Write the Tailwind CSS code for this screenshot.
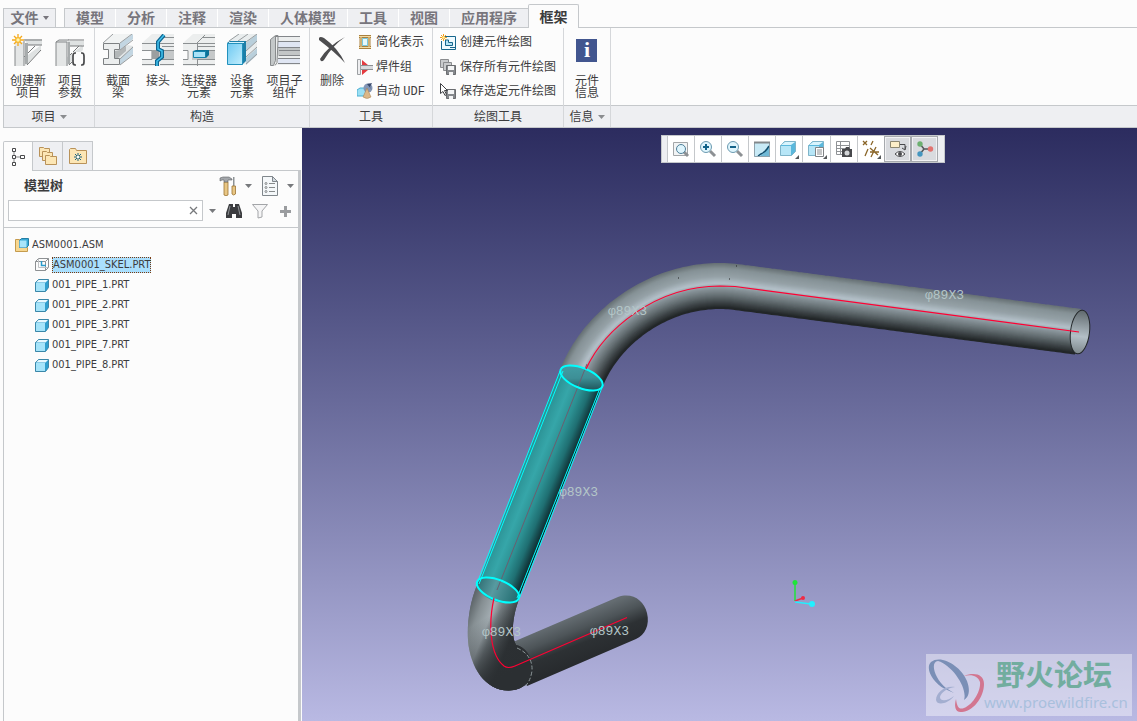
<!DOCTYPE html>
<html lang="zh-CN">
<head>
  <meta charset="UTF-8" />
  <meta name="viewport" content="width=device-width, initial-scale=1.0"/>
  <title>ASM0001 - 框架</title>
  <script src="https://cdn.jsdelivr.net/npm/@tailwindcss/browser@4"></script>
</head>
<body class="min-h-screen flex flex-col bg-[#fcfcfc] text-[#3c3c3e] text-xs leading-3 font-['Liberation_Sans','Noto_Sans_CJK_SC',sans-serif]">

  <!-- Ribbon tabs -->
  <nav class="flex items-end h-7 pl-[3px] text-sm leading-4 font-bold text-[#77757c] relative">
    <div class="absolute inset-x-0 bottom-0 ml-[3px] border-b border-[#c5c8cb]"></div>
    <button class="relative h-5 w-[53px] bg-[#eeeff2] border border-[#c5c8cb] flex items-center justify-center gap-1">文件
      <svg class="w-[6px] h-[4px]" viewBox="0 0 6 4"><path d="M0 0h6L3 4z" fill="#77757c"/></svg>
    </button>
    <div class="relative ml-2 h-5 flex bg-[#eeeff2] border border-r-0 border-[#c5c8cb]">
      <button class="w-[51px] border-r border-white">模型</button>
      <button class="w-[51px] border-r border-white">分析</button>
      <button class="w-[51px] border-r border-white">注释</button>
      <button class="w-[51px] border-r border-white">渲染</button>
      <button class="w-[79px] border-r border-white">人体模型</button>
      <button class="w-[51px] border-r border-white">工具</button>
      <button class="w-[51px] border-r border-white">视图</button>
      <button class="w-[78px]">应用程序</button>
    </div>
    <button class="relative h-6 w-[51px] bg-[#fcfcfc] border border-b-0 border-[#c5c8cb] rounded-t-xs text-[#3c3c3e]">框架</button>
  </nav>

  <!-- Ribbon groups -->
  <div class="flex h-[100px] ml-[3px] border-l border-b border-[#c5c8cb]">
    <section class="w-[91px] flex flex-col border-r border-[#d5d7da]">
      <div class="flex-1 flex pt-[6px] px-[3px]">
        <button class="w-[42px] flex flex-col items-center gap-[9px]">
          <svg class="w-8 h-8 shrink-0" viewBox="0 0 32 32">
            <path d="M12 5h18v6H16zM13 32l16-16v-5l-17 13z" fill="#dfe2e2"/><path d="M12 6h18M15 11h15M12 23l11-11M15 31l14-15" stroke="#77797a" fill="none"/>
            <path d="M3 8h9v24H3z" fill="#e4e6e6"/><path d="M12 7v25M3 12v20" stroke="#85888a"/><path d="M13 9h3v21h-3z" fill="#a7abac"/>
            <path d="M6 0v12M0 6h12M2 2l8 8M10 2l-8 8" stroke="#f5a91c" stroke-width="1.300"/><circle cx="6" cy="6" r="3" fill="#f8b930"/><circle cx="6" cy="6" r="1.700" fill="#fff6b0"/>
          </svg>
          <span>创建新<br>项目</span>
        </button>
        <button class="w-[42px] flex flex-col items-center gap-[9px]">
          <svg class="w-8 h-8 shrink-0" viewBox="0 0 32 32">
            <path d="M12 7h18v5H16zM13 32l16-16v-5l-17 13z" fill="#dfe2e2"/><path d="M14 6h16M15 12h15M14 23l11-11M15 31l8-8" stroke="#77797a" fill="none"/>
            <path d="M2 8l3-2h11l-3 2v24H2z" fill="#e4e6e6"/><path d="M2 32V8h11v24M2 8l3-2h10" stroke="#85888a" fill="none"/><path d="M14 8h2v22h-2z" fill="#a7abac"/>
            <path d="M18 18h13v14H18z" fill="#fcfcfc"/><path d="M22 19h-1q-2 0-2 3v6q0 3 2 3h1M27 19h1q2 0 2 3v6q0 3-2 3h-1" stroke="#48494b" stroke-width="1.700" fill="none"/>
          </svg>
          <span>项目<br>参数</span>
        </button>
      </div>
      <div class="h-[22px] bg-[#eeeff2] border-t border-[#c5c8cb] flex items-center justify-center gap-1">项目
        <svg class="w-[7px] h-[4px]" viewBox="0 0 7 4"><path d="M0 0h7L3.500 4z" fill="#8a8c8f"/></svg>
      </div>
    </section>

    <section class="w-[215px] flex flex-col border-r border-[#d5d7da]">
      <div class="flex-1 flex pt-[6px] pl-[2px]">
        <button class="w-[42px] flex flex-col items-center gap-[9px]">
          <svg class="w-8 h-8 shrink-0" viewBox="0 0 32 32">
            <path d="M1 9L11 0h20L18 9z" fill="#f1f3f3"/><path d="M18 9L31 0v5L18 16z" fill="#c3d6e2"/><path d="M12 17l6-1 8-5 5 1v9L18 31v-6l-6-1z" fill="#e2e6e7"/>
            <path d="M18 25l13-12v7L18 31z" fill="#c3d6e2"/><path d="M12 17l6-1 6-4v5l-8 7h-4z" fill="#b3b7b8"/>
            <path d="M1.500 9.500h16v6h-5v9h5v6h-16v-6h5v-9h-5z" fill="#eceeee" stroke="#7d8082"/><path d="M1 9L11 0M18 9L30 0M18 16L31 6M18 25l13-12M18 31l13-10" stroke="#9a9ea0" fill="none"/>
          </svg>
          <span>截面<br>梁</span>
        </button>
        <button class="w-[38px] flex flex-col items-center gap-[9px]">
          <svg class="w-8 h-8 shrink-0" viewBox="0 0 32 32">
            <path d="M0 9L10 0h22v32H0z" fill="#eceeee"/><path d="M16 17h16v9H16z" fill="#c5c8c9"/><path d="M0 9.500h32M20 3.500h12M20 12.500h12M20 16.500h12M0 16.500h10v9H0M0 30.500h14M18 25.500h14M18 30.500h14" stroke="#8c9092" fill="none"/><path d="M10 16h7v9h-7z" fill="#9b9fa0"/><path d="M0 17h9v8H0z" fill="#fcfcfc"/>
            <path d="M22 1l-6 7v7l4 2v6l-5 4v5" stroke="#0d6590" stroke-width="4" fill="none"/><path d="M22 1l-6 7v7l4 2v6l-5 4v5" stroke="#43c2ee" stroke-width="1.500" fill="none"/>
          </svg>
          <span>接头</span>
        </button>
        <button class="w-[44px] flex flex-col items-center gap-[9px]">
          <svg class="w-8 h-8 shrink-0" viewBox="0 0 32 32">
            <path d="M0 9L10 0h22v32H0z" fill="#eceeee"/><path d="M9 17h23v9H9z" fill="#c5c8c9"/><path d="M0 17h5v8H0z" fill="#fcfcfc"/><path d="M0 9.500h32M14 9l8-8M19 3.500h13M15 12.500h17M15 16.500h17M0 16.500h5v9H0M0 30.500h14M14 25.500h18M14 30.500h18M14.500 9v7M14.500 26v6" stroke="#8c9092" fill="none"/>
            <path d="M10 17l3-1h13v5l-3 3h-3z" fill="#0d7197"/><path d="M10.500 17.500h12v6h-12z" fill="#a9e2f8" stroke="#1583ac"/>
          </svg>
          <span>连接器<br>元素</span>
        </button>
        <button class="w-[42px] flex flex-col items-center gap-[9px]">
          <svg class="w-8 h-8 shrink-0" viewBox="0 0 32 32">
            <defs><linearGradient id="dev" x1="0" y1="0" x2="1" y2="1"><stop offset="0" stop-color="#6fc9f1"/><stop offset="1" stop-color="#c2eefd"/></linearGradient></defs>
            <path d="M1 8L12 0h19v20L19 31z" fill="#e9edee"/><path d="M20 9L31 0v7L20 17zM20 24l11-10v7L20 31z" fill="#b9cfdb"/><path d="M3 7L13 0M12 7l10-7M20 8L31 0M20 17L31 7M20 23l11-10M20 30l11-10" stroke="#9a9ea0"/>
            <path d="M1 9l3-2h16v20l-4 4z" fill="#1c7fa8"/><path d="M1.500 9.500h15v21h-15z" fill="url(#dev)" stroke="#2291bd"/><path d="M3 8.500h15" stroke="#d5f3fd"/>
          </svg>
          <span>设备<br>元素</span>
        </button>
        <button class="w-[43px] flex flex-col items-center gap-[9px]">
          <svg class="w-8 h-8 shrink-0" viewBox="0 0 32 32">
            <path d="M7 3h24v28H7z" fill="#eceeee"/><path d="M9 8h22v5H9zM9 24h22v5H9z" fill="#e0e6f3"/><path d="M9 14h22v8H9z" fill="#c3c6c7"/><path d="M7 2.500h24M9 7.500h22M9 13.500h22M10 16.500h21M10 21.500h21M9 24.500h22M9 29.500h22" stroke="#83868a"/>
            <path d="M1.500 5.500l5-4v25l-2 5h-3z" fill="#c4c8c9" stroke="#888b8d"/><path d="M7 1.500h2v5l-1 22-2 3" stroke="#888b8d" fill="none"/>
          </svg>
          <span>项目子<br>组件</span>
        </button>
      </div>
      <div class="h-[22px] bg-[#eeeff2] border-t border-[#c5c8cb] flex items-center justify-center">构造</div>
    </section>

    <section class="w-[123px] flex flex-col border-r border-[#d5d7da]">
      <div class="flex-1 flex">
        <button class="w-[44px] pt-[6px] flex flex-col items-center gap-[9px]">
          <svg class="w-8 h-8 shrink-0" viewBox="0 0 32 32"><path d="M3 4q1-2 5 0Q22 14 29 29Q20 19 3 6zM29 3Q16 12 8 26q-3 3-4-1Q12 12 29 3z" fill="#4d4d4f"/></svg>
          <span>删除</span>
        </button>
        <div class="flex flex-col pt-[2px] pl-[3px]">
          <button class="h-6 flex items-center gap-[3px]">
            <svg class="w-4 h-4" viewBox="0 0 16 16"><path d="M2 2.500h12M2 13.500h12M4 1v14M12 1v14" stroke="#a9803e" stroke-width="3"/><path d="M2 2.500h12M2 13.500h12M4 2v12M12 2v12" stroke="#f3dca4"/><path d="M5.500 4.500h5v7h-5z" fill="#e6f8fb" stroke="#79c7dc"/></svg>
            简化表示
          </button>
          <button class="h-[25px] flex items-center gap-[3px]">
            <svg class="w-4 h-4" viewBox="0 0 16 16"><path d="M.500.500h3v15h-3z" fill="#eeeef0" stroke="#9da0a3"/><path d="M5 1l6 5H5zM5 16l6-5H5z" fill="#e33b40"/><path d="M4 6.500h12M4 10.500h12" stroke="#8d8f92"/><path d="M4 7h12v3H4z" fill="#d9dadd"/></svg>
            焊件组
          </button>
          <button class="h-6 flex items-center gap-[3px]">
            <svg class="w-4 h-4" viewBox="0 0 16 16"><path d="M0 7l3-2h8v6l-2 2H0z" fill="#9adff3" stroke="#4aaed1"/><circle cx="11" cy="5" r="4.500" fill="#8396b5"/><path d="M10 1l5-1-2 4 2 3z" fill="#39496c"/><path d="M10 5l4 9q-4 3-8 0z" fill="#dcb787" stroke="#a57e4c" stroke-width=".5"/></svg>
            <span>自动 <span class="font-['Liberation_Mono',monospace]">UDF</span></span>
          </button>
        </div>
      </div>
      <div class="h-[22px] bg-[#eeeff2] border-t border-[#c5c8cb] flex items-center justify-center">工具</div>
    </section>

    <section class="w-[131px] flex flex-col border-r border-[#d5d7da]">
      <div class="flex-1 flex flex-col items-start pt-[2px] pl-[7px]">
        <button class="h-6 flex items-center gap-1">
          <svg class="w-4 h-4" viewBox="0 0 16 16"><path d="M4 2.500h11.500v13h-14V7" fill="#eefaff" stroke="#17668c"/><path d="M5.500 6v5.500h7v-3h-4V6z" fill="#b4e3f5" stroke="#17668c"/><path d="M10 13.500h5" stroke="#17668c"/><path d="M3.500 0v7M0 3.500h7M1 1l5 5M6 1L1 6" stroke="#f59d1b"/><circle cx="3.500" cy="3.500" r="1.300" fill="#fff3a0"/></svg>
          创建元件绘图
        </button>
        <button class="h-[25px] flex items-center gap-1">
          <svg class="w-4 h-4" viewBox="0 0 16 16"><g fill="#c9cbcd" stroke="#8a8c8f"><path d="M.500.500h8v8h-8z"/><path d="M3.500 3.500h8v8h-8z"/></g><path d="M6.500 6.500h9v9h-9z" fill="#85888c" stroke="#6b6d70"/><path d="M8 7h6v4H8zM9 13h4v3H9z" fill="#f3f4f5"/></svg>
          保存所有元件绘图
        </button>
        <button class="h-6 flex items-center gap-1">
          <svg class="w-4 h-4" viewBox="0 0 16 16"><path d="M6.500 6.500h9v9h-9z" fill="#85888c" stroke="#6b6d70"/><path d="M8 7h6v4H8zM9 13h4v3H9z" fill="#f3f4f5"/><path d="M.500.500v10l2.500-2 2 4 1.500-1-2-4h3z" fill="#fff" stroke="#404144"/></svg>
          保存选定元件绘图
        </button>
      </div>
      <div class="h-[22px] bg-[#eeeff2] border-t border-[#c5c8cb] flex items-center justify-center">绘图工具</div>
    </section>

    <section class="w-[47px] flex flex-col border-r border-[#d5d7da]">
      <div class="flex-1 flex justify-center pt-[6px]">
        <button class="flex flex-col items-center gap-[9px]">
          <span class="w-[21px] h-[23px] mt-[5px] mb-1 shrink-0 bg-[#42568f] text-white font-bold text-[22px] leading-[22px] text-center font-['Liberation_Serif',serif]">i</span>
          <span>元件<br>信息</span>
        </button>
      </div>
      <div class="h-[22px] bg-[#eeeff2] border-t border-[#c5c8cb] flex items-center justify-center gap-1">信息
        <svg class="w-[7px] h-[4px]" viewBox="0 0 7 4"><path d="M0 0h7L3.500 4z" fill="#8a8c8f"/></svg>
      </div>
    </section>

    <div class="flex-1 flex flex-col justify-end"><div class="h-[22px] bg-[#eeeff2] border-t border-[#c5c8cb]"></div></div>
  </div>

  <div class="flex-1 flex">
    <!-- Model tree -->
    <aside class="w-[302px] shrink-0 pl-[3px] pr-[1px] pt-[13px] flex flex-col">
      <div class="relative flex h-[30px]">
        <button class="w-[30px] bg-[#fcfcfc] border border-b-0 border-[#c5c8cb] rounded-tl-xs flex items-center justify-center">
          <svg class="w-[15px] h-5" viewBox="0 0 15 20"><path d="M3 4v12M3 10h8" stroke="#88898b"/><path d="M1.500 1.500h3v3h-3zM1.500 8.500h3v3h-3zM1.500 15.500h3v3h-3zM9.500 8.500h4v3h-4z" fill="#fff" stroke="#48494b"/></svg>
        </button>
        <button class="w-[30px] bg-[#eeeff2] border-y border-r border-[#c5c8cb] flex items-center justify-center">
          <svg class="w-5 h-5" viewBox="0 0 20 20"><g fill="#fce6b5" stroke="#b99259"><path d="M1.500 1.500h4l1 1h5v8h-10z"/><path d="M4.500 5.500h4l1 1h5v8h-10z"/><path d="M7.500 9.500h4l1 1h6v8h-11z"/></g></svg>
        </button>
        <button class="w-[30px] bg-[#eeeff2] border-y border-r border-[#c5c8cb] flex items-center justify-center">
          <svg class="w-[18px] h-4" viewBox="0 0 18 16"><path d="M.500 15.500v-14l1-1h5l1 2h10v13z" fill="#fce6b5" stroke="#b99259"/><path d="M9 5v8M5 9h8M6 6l6 6M12 6l-6 6" stroke="#1d6483"/><path d="M8 8h2v2H8z" fill="#fff"/></svg>
        </button>
      </div>
      <div class="flex-1 border-l border-r-3 border-t border-[#c5c8cb] -mt-px">
        <div class="h-[29px] pl-5 pr-1 flex items-center">
          <h2 class="flex-1 text-[13px] leading-4 font-bold">模型树</h2>
          <button><svg class="w-[18px] h-5" viewBox="0 0 18 20"><path d="M5 6h4v13q-2 1.500-4 0z" fill="#e8c684" stroke="#9c7434" stroke-width=".8"/><path d="M1 5V2l3-1h6l3 2v1H9v2H5V4H3z" fill="#a3a6aa" stroke="#5e6164" stroke-width=".6"/><path d="M14 1h1.500v9H14z" fill="#8e9396"/><path d="M13 10h3.500v8q-2 2-3.500 0z" fill="#e8c684" stroke="#9c7434" stroke-width=".8"/></svg></button>
          <svg class="w-[7px] h-[4px] ml-2 mr-[10px]" viewBox="0 0 7 4"><path d="M0 0h7L3.500 4z" fill="#77797c"/></svg>
          <button><svg class="w-4 h-5" viewBox="0 0 16 20"><path d="M.500.500h10l5 5v14H.500z" fill="#f5f8fa" stroke="#80878c"/><path d="M10.500.500v5h5z" fill="#d3dae0" stroke="#80878c"/><g stroke="#6b6e70" fill="none" stroke-width=".8"><circle cx="4" cy="7.500" r="1"/><circle cx="4" cy="11.500" r="1"/><circle cx="4" cy="15.500" r="1"/><path d="M7 7.500h6M7 11.500h6M7 15.500h6"/></g></svg></button>
          <svg class="w-[7px] h-[4px] ml-[9px]" viewBox="0 0 7 4"><path d="M0 0h7L3.500 4z" fill="#77797c"/></svg>
        </div>
        <div class="h-7 pl-1 flex items-start border-b border-[#c5c8cb]">
          <div class="relative">
            <input type="text" aria-label="搜索模型树" class="block w-[195px] h-[21px] bg-white border border-[#c5c8cb] pl-1 pr-5 focus:outline-none">
            <button class="absolute right-[5px] top-[6px]" aria-label="清除"><svg class="w-[9px] h-[9px]" viewBox="0 0 9 9"><path d="M1 1l7 7M8 1L1 8" stroke="#77797c" stroke-width="1.300"/></svg></button>
          </div>
          <div class="flex items-center h-[22px]">
            <svg class="w-[7px] h-[4px] mx-[6px]" viewBox="0 0 7 4"><path d="M0 0h7L3.500 4z" fill="#77797c"/></svg>
            <button class="ml-1"><svg class="w-4 h-4" viewBox="0 0 16 16"><path d="M3 1h4v3h2V1h4l3 9v5h-6v-4H6v4H0v-5z" fill="#3b3c3f"/><path d="M4 3L2 12M12 3l2 9" stroke="#8f9296"/></svg></button>
            <button class="ml-[10px]"><svg class="w-4 h-4" viewBox="0 0 16 16"><path d="M.500 1.500h15L10 8v6l-4 1V8z" fill="#f5f5f6" stroke="#a3a5a8"/></svg></button>
            <button class="ml-3"><svg class="w-[11px] h-[11px]" viewBox="0 0 11 11"><path d="M5.500 0v11M0 5.500h11" stroke="#9a9c9f" stroke-width="3"/></svg></button>
          </div>
        </div>
        <ul class="pt-[7px] text-[11px] leading-4 font-['DejaVu_Sans_Condensed','Noto_Sans',sans-serif]">
          <li class="h-5 pl-[11px] flex items-center gap-[3px]">
            <svg class="w-[14px] h-[14px]" viewBox="0 0 14 14"><path d="M.500 1.500h4v8h8v4H.500z" fill="#f7d790" stroke="#c59b4d"/><path d="M4.500 2.500l2-2h7v7l-2 2h-7z" fill="#39a9d6" stroke="#257fa5"/><path d="M4.500 2.500h7v7h-7z" fill="#a9e5fa"/></svg>
            ASM0001.ASM
          </li>
          <li class="h-5 pl-[31px] flex items-center gap-[3px]">
            <svg class="w-[14px] h-[14px]" viewBox="0 0 14 14"><path d="M.500 3.500l3-3h10v9l-3 3H.500zM.500 3.500h10v9M10.500 3.500l3-3" fill="none" stroke="#8d9093"/><path d="M3.500 1v8.500H13" fill="none" stroke="#c0c3c6"/><path d="M6.500 3v4.500H11" fill="none" stroke="#2b9bcb" stroke-width="1.500"/></svg>
            <span class="h-4 bg-[#aadffd] border border-dotted border-[#7a3a10] leading-[14px]">ASM0001_SKEL.PRT</span>
          </li>
          <li class="h-5 pl-[31px] flex items-center gap-[3px]"><svg class="w-[14px] h-[14px]" viewBox="0 0 14 14"><use href="#part"/></svg>001_PIPE_1.PRT</li>
          <li class="h-5 pl-[31px] flex items-center gap-[3px]"><svg class="w-[14px] h-[14px]" viewBox="0 0 14 14"><use href="#part"/></svg>001_PIPE_2.PRT</li>
          <li class="h-5 pl-[31px] flex items-center gap-[3px]"><svg class="w-[14px] h-[14px]" viewBox="0 0 14 14"><use href="#part"/></svg>001_PIPE_3.PRT</li>
          <li class="h-5 pl-[31px] flex items-center gap-[3px]"><svg class="w-[14px] h-[14px]" viewBox="0 0 14 14"><use href="#part"/></svg>001_PIPE_7.PRT</li>
          <li class="h-5 pl-[31px] flex items-center gap-[3px]"><svg class="w-[14px] h-[14px]" viewBox="0 0 14 14"><use href="#part"/></svg>001_PIPE_8.PRT</li>
        </ul>
      </div>
    </aside>

    <!-- Graphics area -->
    <main class="flex-1 relative overflow-hidden bg-linear-to-b from-[#2c2c5f] to-[#b9b9e3]">
      <svg class="absolute inset-0 w-full h-full" viewBox="302 128 835 593" preserveAspectRatio="xMinYMin slice">
        <defs>
          <g id="part"><path d="M.500 4.500l3-3h10v8l-3 4H.500z" fill="#2f9fce" stroke="#3b87a8"/><path d="M1 4.500L3.500 2h9.500l-2.500 2.500z" fill="#e8f9ff"/><path d="M1 5h9v8H1z" fill="#a5e4fa"/></g>
          <linearGradient id="sel" gradientUnits="userSpaceOnUse" x1="519" y1="475" x2="561" y2="492">
            <stop offset="0" stop-color="#2a8f92"/><stop offset=".3" stop-color="#36a6a9"/><stop offset=".55" stop-color="#2c9092"/><stop offset=".75" stop-color="#1f6f72"/><stop offset=".92" stop-color="#12393d"/><stop offset="1" stop-color="#0d2528"/>
          </linearGradient>
          <linearGradient id="low" gradientUnits="userSpaceOnUse" x1="560" y1="622" x2="577" y2="665">
            <stop offset="0" stop-color="#646c71"/><stop offset=".3" stop-color="#4d5458"/><stop offset=".6" stop-color="#2d3134"/><stop offset="1" stop-color="#272a2d"/>
          </linearGradient>
          <linearGradient id="bend" gradientUnits="userSpaceOnUse" x1="468" y1="612" x2="514" y2="630">
            <stop offset="0" stop-color="#60686c"/><stop offset=".2" stop-color="#868f93"/><stop offset=".45" stop-color="#a3adb2"/><stop offset=".6" stop-color="#737c80"/><stop offset="1" stop-color="#2d3134"/>
          </linearGradient>
          <linearGradient id="shade" gradientUnits="userSpaceOnUse" x1="482" y1="620" x2="514" y2="672">
            <stop offset="0" stop-color="#2b2f32" stop-opacity="0"/><stop offset="1" stop-color="#2b2f32"/>
          </linearGradient>
          <radialGradient id="glint"><stop offset="0" stop-color="#e6edf0"/><stop offset="1" stop-color="#b0babf" stop-opacity="0"/></radialGradient>
          <linearGradient id="bore" x1="0" y1="0" x2="0" y2="1">
            <stop offset="0" stop-color="#5f686c"/><stop offset=".6" stop-color="#b3bfc6"/><stop offset="1" stop-color="#7d878b"/>
          </linearGradient>
          <linearGradient id="cap" x1="0" y1="0" x2="1" y2="1"><stop offset="0" stop-color="#46a3aa"/><stop offset=".5" stop-color="#3d8f96"/><stop offset="1" stop-color="#123b40"/></linearGradient>
          <linearGradient id="cap2" x1="0" y1="0" x2="1" y2="0"><stop offset="0" stop-color="#2f6d72"/><stop offset=".4" stop-color="#579aa0"/><stop offset="1" stop-color="#1f6a6e"/></linearGradient>
        </defs>

        <!-- lower leg and bend -->
        <path d="M513 642L618 597C632 592 644 600 647 613C650 625 645 635 636 639L527 686Z" fill="url(#low)"/>
        <g id="lower-bend">
          <path id="bend-shape" d="M477 585C470 602 467 622 468 640C470 668 486 691 509 690.500C523 690 532 682 532 668C532 656 525 647 516 645C511 636 512 618 519 599Z" fill="url(#bend)"/>
          <ellipse cx="486" cy="604" rx="6" ry="22" fill="url(#glint)" transform="rotate(8 486 604)"/>
          <use href="#bend-shape" style="fill:none"/>
          <path d="M477 585C470 602 467 622 468 640C470 668 486 691 509 690.500C523 690 532 682 532 668C532 656 525 647 516 645C511 636 512 618 519 599Z" fill="url(#shade)"/>
        </g>
        <path d="M517 648Q533 655 532 671Q530 683 524 687" fill="none" stroke="#8b9597" stroke-dasharray="4 2"/>

        <!-- upper run -->
        <g id="upper"></g>
        <ellipse cx="1080" cy="332" rx="9.500" ry="22" transform="rotate(7 1080 332)" fill="url(#bore)" stroke="#24282a"/>

        <!-- selected tube -->
        <path d="M560 370L477 586Q480 597 498 602Q514 605 519 598L603 384Z" fill="url(#sel)"/>
        <ellipse cx="581.500" cy="378" rx="22.500" ry="10" transform="rotate(22 581.500 378)" fill="url(#cap)"/>
        <ellipse cx="498" cy="590" rx="22.500" ry="10" transform="rotate(22 498 590)" fill="url(#cap2)"/>
        <path d="M587 364L497 590" stroke="#6a5f70"/>
        <g fill="none" stroke="#00ffff">
          <g stroke-width="2"><ellipse cx="581.500" cy="378" rx="22.500" ry="10" transform="rotate(22 581.500 378)"/><ellipse cx="498" cy="590" rx="22.500" ry="10" transform="rotate(22 498 590)"/></g>
          <path d="M560 371L476 586M563 371L479 584M603 385L519 599M600 388L517 598"/>
        </g>

        <!-- center lines -->
        <g fill="none" stroke="#ff0033" stroke-width="1.200">
          <path d="M586 369C604 330 655 286 720 286L735 286.500L1079 332"/>
          <path d="M494 598C488 625 490 655 504 666Q508 669 515 666L627 617.500"/>
        </g>
        <path d="M678 278h1M736 266h1M729 279h1" stroke="#222"/>

        <g fill="#b4c6c8" font-family="'Liberation Mono', monospace" font-size="13">
          <text x="608" y="315">φ89X3</text>
          <text x="925" y="299">φ89X3</text>
          <text x="559" y="496">φ89X3</text>
          <text x="482" y="636">φ89X3</text>
          <text x="590" y="635">φ89X3</text>
        </g>

        <!-- csys triad -->
        <path d="M795 601V583" stroke="#1fe53a" stroke-width="1.500"/><circle cx="795" cy="582.500" r="2.500" fill="#1fe53a"/>
        <path d="M795 601l8-3" stroke="#f02a44" stroke-width="1.500"/><circle cx="803" cy="598" r="2" fill="#f02a44"/>
        <path d="M795 602l16 2" stroke="#22f0ff" stroke-width="1.500"/><circle cx="812" cy="604" r="3" fill="#22f0ff"/>
      </svg>

      <!-- View toolbar -->
      <div class="absolute left-[359px] top-[7px] h-7 flex bg-[#eeeff2] border border-[#c5c8cb] pl-[5px] pr-[6px]">
        <button class="w-[27px] bg-white border-l border-[#c5c8cb] flex items-center justify-center"><svg class="w-[18px] h-[18px]" viewBox="0 0 18 18"><path d="M1.500 2.500h14v13h-14z" fill="#f2f4f5" stroke="#a3a6a8"/><path d="M12 12l4 4" stroke="#8d9194" stroke-width="3"/><circle cx="9" cy="9" r="4.500" fill="#dff5fd" stroke="#4e7f98"/></svg></button>
        <button class="w-[27px] bg-white border-l border-[#c5c8cb] flex items-center justify-center"><svg class="w-[18px] h-[18px]" viewBox="0 0 18 18"><path d="M11 11l5 5" stroke="#8d9194" stroke-width="3"/><circle cx="7" cy="7" r="5.500" fill="#dff5fd" stroke="#6b9ab0"/><path d="M7 4v6M4 7h6" stroke="#13638a" stroke-width="2"/></svg></button>
        <button class="w-[27px] bg-white border-l border-[#c5c8cb] flex items-center justify-center"><svg class="w-[18px] h-[18px]" viewBox="0 0 18 18"><path d="M11 11l5 5" stroke="#8d9194" stroke-width="3"/><circle cx="7" cy="7" r="5.500" fill="#dff5fd" stroke="#6b9ab0"/><path d="M4 7h6" stroke="#13638a" stroke-width="2"/></svg></button>
        <button class="w-[27px] bg-white border-l border-[#c5c8cb] flex items-center justify-center"><svg class="w-[18px] h-[18px]" viewBox="0 0 18 18"><path d="M1 2h16v15H1z" fill="#c8eaf6"/><path d="M17 5v12H5Q12 14 17 5z" fill="#6fb9d6"/><path d="M5 16l3-2q4-2 6-5l2-3" stroke="#0e4d6d" stroke-width="1.500" fill="none"/><path d="M1.500 2.500h15v14h-15z" stroke="#8fa3ad" fill="none"/><path d="M1 2.500h16" stroke="#83888b" stroke-width="2"/></svg></button>
        <button class="w-[27px] bg-white border-l border-[#c5c8cb] flex items-center justify-center"><svg class="w-5 h-5" viewBox="0 0 20 20"><g id="box"><path d="M1.500 6.500l4-4h11v10l-4 4h-11z" fill="#5bb8dc" stroke="#7fb4c9"/><path d="M2 6l4-3h10l-4 3z" fill="#d9f4fd"/><path d="M2 7h10v9H2z" fill="#b7e6f7"/></g><path d="M20 16v4h-4z" fill="#55585a"/></svg></button>
        <button class="w-[28px] bg-white border-l border-[#c5c8cb] flex items-center justify-center"><svg class="w-5 h-5" viewBox="0 0 20 20"><use href="#box"/><path d="M8.500 8.500h8v9h-8z" fill="#fff" stroke="#808386"/><path d="M10 11h5M10 13h5M10 15h5" stroke="#8b8e90"/><path d="M20 16v4h-4z" fill="#55585a"/></svg></button>
        <button class="w-[27px] bg-white border-l border-[#c5c8cb] flex items-center justify-center"><svg class="w-[18px] h-[18px]" viewBox="0 0 18 18"><path d="M1.500 1.500h13v13h-13zM5.500 1.500v13M1.500 5.500h13M1.500 8.500h13M1.500 11.500h13" fill="#fff" stroke="#909396"/><path d="M7 9h3l1-2h3l1 2h2v8H7z" fill="#48494c"/><circle cx="12" cy="13" r="2.500" fill="#d3d5d7"/></svg></button>
        <button class="w-[27px] bg-white border-l border-[#c5c8cb] flex items-center justify-center"><svg class="w-5 h-5" viewBox="0 0 20 20"><path d="M2 2l4 4M6 2L2 6M12 2l-2 4M7 10l-3 7M9 9l8 7M15 8l-5 10M9 13h9" stroke="#8a6528" stroke-width="1.300"/><path d="M20 16v4h-4z" fill="#55585a"/></svg></button>
        <button class="w-[27px] bg-[#d9dbdf] border border-[#a6a9ad] shadow-[inset_0_0_0_1px_#f2f2f4] flex items-center justify-center"><svg class="w-[18px] h-[18px]" viewBox="0 0 18 18"><path d="M1.500 1.500h9v6h-9z" fill="#fdeec8" stroke="#8d8770"/><path d="M11 4.500h5v5M13 8l3 2 1-4" stroke="#48494c" fill="none"/><path d="M6 14q5-5 10 0-5 5-10 0z" fill="#fff" stroke="#48494c"/><circle cx="11" cy="14" r="2" fill="#48494c"/></svg></button>
        <button class="w-[27px] bg-[#d9dbdf] border border-[#a6a9ad] shadow-[inset_0_0_0_1px_#f2f2f4] flex items-center justify-center"><svg class="w-[18px] h-[18px]" viewBox="0 0 18 18"><path d="M4 4l4 5 6 0M8 9l-4 5" stroke="#55585a" stroke-width="1.500" fill="none"/><circle cx="4" cy="4" r="2.700" fill="#6cb070"/><circle cx="14.500" cy="9" r="2.700" fill="#e2736f"/><circle cx="4" cy="14" r="2.700" fill="#4596c0"/></svg></button>
      </div>

      <!-- Watermark -->
      <div class="absolute right-[5px] bottom-[5px] w-[206px] h-[62px] bg-white/40 flex">
        <svg class="w-[58px] h-full shrink-0" viewBox="0 0 58 62">
          <g fill-rule="evenodd">
            <path d="M5 8C15 0 35 12 41 27C45 38 42 44 38 46C42 34 26 11 12 7C4 8 8 24 20 34L28 39L19 35C6 28-1 14 5 8z" fill="#7a8fb6"/>
            <path d="M38 22C48 18 58 20 58 30C58 44 46 58 36 58C29 59 28 52 30 45C31 53 33 56 38 54C48 50 55 36 54 28C52 22 46 20 38 22z" fill="#d27690"/>
            <path d="M29 33C20 31 10 38 10 46C11 52 22 50 28 42C22 47 14 48 14 43C15 38 22 34 29 33z" fill="#a3aed0"/>
          </g>
        </svg>
        <div class="flex flex-col pt-1">
          <span class="pl-3 text-[29px] leading-[30px] font-bold text-[#72ad9f] font-['Noto_Sans_CJK_SC',sans-serif]">野火论坛</span>
          <span class="text-[15px] leading-7 text-[#a9c0dd] font-['Noto_Sans',sans-serif]">www.proewildfire.cn</span>
        </div>
      </div>
    </main>
  </div>

  <script>
    const NS = "http://www.w3.org/2000/svg";

    // Blend between color stops, t from 0 to 1
    function ramp(stops, t) {
      let i = 1;
      while (i < stops.length - 1 && t > stops[i][0]) i++;
      const [a, ca] = stops[i - 1];
      const [b, cb] = stops[i];
      const k = (t - a) / (b - a);
      return "rgb(" + ca.map((v, n) => Math.round(v + (cb[n] - v) * k)).join(",") + ")";
    }

    // Shade a tube with lines parallel to its axis
    function drawTube(id, d, radius, stops) {
      const group = document.getElementById(id);
      const axis = document.createElementNS(NS, "path");
      axis.setAttribute("d", d);
      const total = axis.getTotalLength();
      for (let off = -radius; off <= radius; off++) {
        const pts = [];
        for (let s = 0; s <= total; s += 3) {
          const p = axis.getPointAtLength(s);
          const q = axis.getPointAtLength(Math.min(s + 1, total));
          const r = axis.getPointAtLength(Math.max(s - 1, 0));
          const len = Math.hypot(q.x - r.x, q.y - r.y);
          pts.push((p.x + (r.y - q.y) / len * off).toFixed(1) + "," + (p.y + (q.x - r.x) / len * off).toFixed(1));
        }
        const line = document.createElementNS(NS, "polyline");
        line.setAttribute("points", pts.join(" "));
        line.setAttribute("fill", "none");
        line.setAttribute("stroke-width", "2");
        line.setAttribute("stroke", ramp(stops, (off + radius) / (2 * radius)));
        group.appendChild(line);
      }
    }

    drawTube("upper", "M581.5 378C600 330 655 286 720 286Q728 286 736 287L1080 332", 22, [
      [0, [104, 114, 118]], [0.12, [134, 146, 150]], [0.3, [149, 161, 167]], [0.45, [180, 193, 201]],
      [0.55, [140, 152, 158]], [0.72, [102, 112, 116]], [0.88, [62, 69, 72]], [1, [34, 38, 40]]
    ]);
  </script>
</body>
</html>
